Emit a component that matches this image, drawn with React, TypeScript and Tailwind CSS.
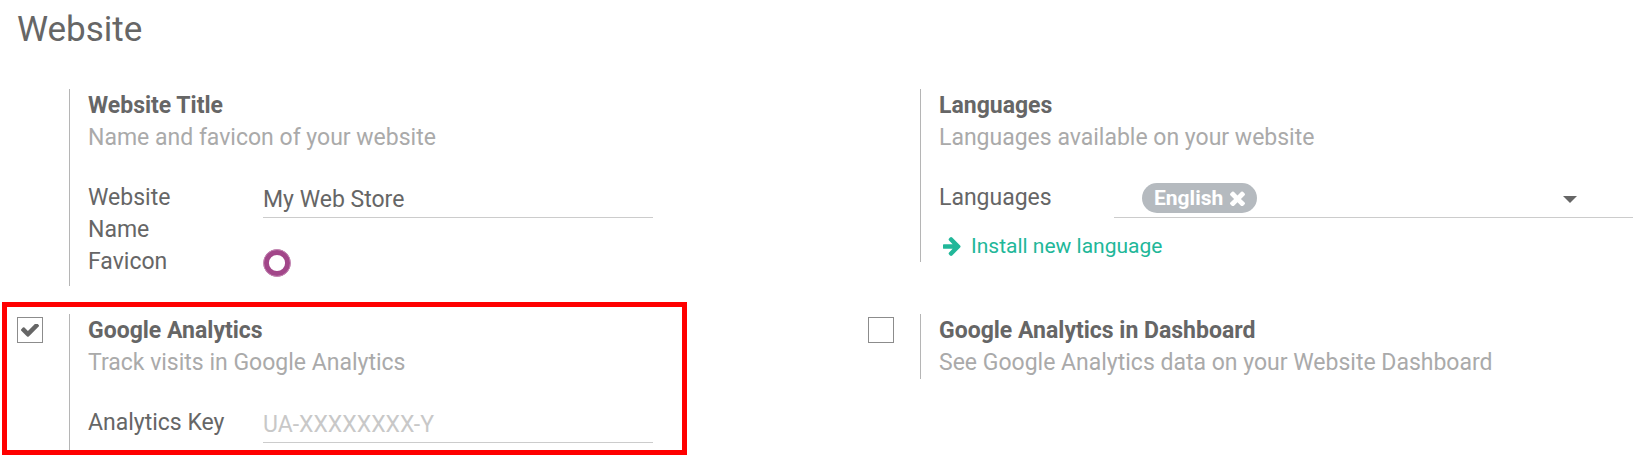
import { useState, type ReactNode } from "react";

function CheckIcon() {
  return (
    <svg
      viewBox="121 434 1550 1088"
      aria-hidden="true"
      className="pointer-events-none invisible col-start-1 row-start-1 h-[13px] w-[18px] fill-[#666666] peer-checked:visible"
    >
      <path d="M1671 566q0 40-28 68l-724 724-136 136q-28 28-68 28t-68-28l-136-136-362-362q-28-28-28-68t28-68l136-136q28-28 68-28t68 28l294 295 656-657q28-28 68-28t68 28l136 136q28 28 28 68z" />
    </svg>
  );
}

function TimesIcon() {
  return (
    <svg viewBox="302 334 1188 1188" aria-hidden="true" className="h-[15px] w-[15px] fill-current">
      <path d="M1490 1322q0 40-28 68l-136 136q-28 28-68 28t-68-28l-294-294-294 294q-28 28-68 28t-68-28l-136-136q-28-28-28-68t28-68l294-294-294-294q-28-28-28-68t28-68l136-136q28-28 68-28t68 28l294 294 294-294q28-28 68-28t68 28l136 136q28 28 28 68t-28 68l-294 294 294 294q28 28 28 68z" />
    </svg>
  );
}

function ArrowIcon() {
  return (
    <svg viewBox="192 180 1408 1560" aria-hidden="true" className="h-[19px] w-[18px] fill-current">
      <path d="M1600 960q0 54-37 91l-651 651q-39 37-91 37-51 0-90-37l-75-75q-38-38-38-91t38-91l293-293h-704q-52 0-84.5-37.5t-32.5-90.5v-128q0-53 32.5-90.5t84.5-37.5h704l-293-294q-38-36-38-90t38-90l75-75q38-38 90-38 53 0 91 38l651 651q37 35 37 90z" />
    </svg>
  );
}

function FaviconIcon() {
  return (
    <svg viewBox="0 0 28 28" role="img" aria-label="Favicon" className="h-7 w-7">
      <circle cx="14" cy="14" r="10.9" fill="none" stroke="#a24689" strokeWidth="5.6" />
      <circle cx="14" cy="14" r="13.4" fill="none" stroke="#c88fb8" strokeWidth="0.8" />
    </svg>
  );
}

type SettingProps = {
  title: string;
  description: string;
  toggle?: { id: string; checked: boolean };
  highlighted?: boolean;
  children?: ReactNode;
};

function Setting({ title, description, toggle, highlighted, children }: SettingProps) {
  return (
    <div className="relative flex items-start">
      <div className="grid w-[52px] shrink-0 place-items-center justify-start pt-[3px]">
        {toggle && (
          <div className="grid place-items-center">
            <input
              type="checkbox"
              id={toggle.id}
              defaultChecked={toggle.checked}
              className="peer col-start-1 row-start-1 h-[26px] w-[26px] appearance-none border border-[#8c8c8c] bg-white"
            />
            <CheckIcon />
          </div>
        )}
      </div>
      <div className="min-w-0 flex-1 border-l border-[#b5b5b5] pt-px pl-[18px]">
        {toggle ? (
          <label htmlFor={toggle.id} className="block font-bold">
            {title}
          </label>
        ) : (
          <h3 className="font-bold">{title}</h3>
        )}
        <p className="text-[#aaaaaa]">{description}</p>
        {children}
      </div>
      {highlighted && (
        <div className="pointer-events-none absolute -top-3 right-[95px] -bottom-[3px] -left-[15px] border-5 border-[#ff0000]" />
      )}
    </div>
  );
}

const fieldGrid = "grid grid-cols-[140px_1fr] gap-x-[35px]";
const textInput =
  "h-9 w-full min-w-0 border-b border-[#cccccc] bg-transparent outline-none placeholder:text-[#c8c8c8]";

export default function App() {
  const [tags, setTags] = useState(["English"]);

  return (
    <main className="bg-white pr-[11px] pb-2 pl-[17px] font-[Roboto,sans-serif] text-[23px] leading-8 text-[#666666]">
      <h2 className="pt-[10px] text-[35px] leading-10">Website</h2>
      <div className="mt-[39px] grid grid-cols-2 items-start gap-x-[86px] gap-y-7">
        <Setting title="Website Title" description="Name and favicon of your website">
          <div className={`${fieldGrid} mt-7 pr-[129px]`}>
            <label htmlFor="website-name">Website Name</label>
            <input id="website-name" type="text" defaultValue="My Web Store" className={textInput} />
          </div>
          <div className={`${fieldGrid} pr-[129px] pb-2`}>
            <span>Favicon</span>
            <div className="pt-[3px]">
              <FaviconIcon />
            </div>
          </div>
        </Setting>

        <Setting title="Languages" description="Languages available on your website">
          <div className={`${fieldGrid} mt-7`}>
            <label htmlFor="languages">Languages</label>
            <div className="relative flex h-9 items-start border-b border-[#cccccc] pt-px pl-7">
              {tags.map((tag) => (
                <button
                  key={tag}
                  type="button"
                  onClick={() => setTags(tags.filter((t) => t !== tag))}
                  className="flex h-[30px] items-center gap-[7px] rounded-full bg-[#b5babf] px-3 text-[21px] font-bold text-white"
                >
                  {tag}
                  <TimesIcon />
                </button>
              ))}
              <select id="languages" defaultValue="" className="h-[30px] min-w-0 flex-1 appearance-none bg-transparent outline-none">
                <option value=""></option>
              </select>
              <svg
                viewBox="0 0 14 7"
                aria-hidden="true"
                className="pointer-events-none absolute top-[14px] right-14 h-[7px] w-[14px] fill-[#666666]"
              >
                <path d="M0 0h14L7 7z" />
              </svg>
            </div>
          </div>
          <a href="#install-language" className="mt-3 flex items-center gap-[10px] pl-1 text-[21px] text-[#21b799]">
            <ArrowIcon />
            Install new language
          </a>
        </Setting>

        <Setting
          title="Google Analytics"
          description="Track visits in Google Analytics"
          toggle={{ id: "google-analytics", checked: true }}
          highlighted
        >
          <div className={`${fieldGrid} mt-7 pr-[129px] pb-[9px]`}>
            <label htmlFor="analytics-key">Analytics Key</label>
            <input id="analytics-key" type="text" placeholder="UA-XXXXXXXX-Y" className={textInput} />
          </div>
        </Setting>

        <Setting
          title="Google Analytics in Dashboard"
          description="See Google Analytics data on your Website Dashboard"
          toggle={{ id: "analytics-dashboard", checked: false }}
        />
      </div>
    </main>
  );
}
